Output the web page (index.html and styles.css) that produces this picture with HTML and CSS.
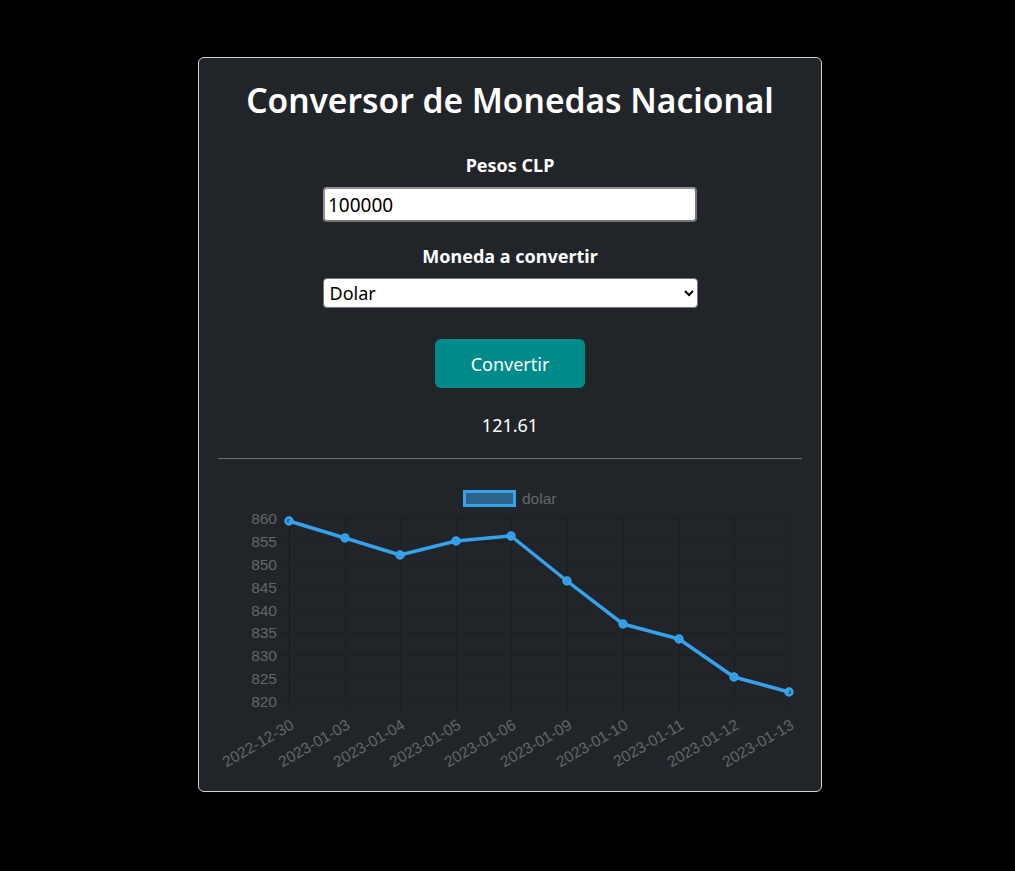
FILE: index.html
```html
<!DOCTYPE html>
<html lang="es">
<head>
<meta charset="utf-8">
<title>Conversor de Monedas Nacional</title>
<link rel="stylesheet" href="styles.css">
</head>
<body>
<main class="card">
  <h1 class="title">Conversor de Monedas Nacional</h1>
  <label class="label label-first" for="pesos">Pesos CLP</label>
  <input class="field input" id="pesos" type="text" value="100000">
  <label class="label label-second" for="moneda">Moneda a convertir</label>
  <select class="field select" id="moneda">
    <option>Dolar</option>
    <option>Euro</option>
  </select>
  <button class="btn" type="button">Convertir</button>
  <p class="result">121.61</p>
  <hr class="divider">
  <svg class="chart" width="583" height="322" viewBox="0 0 583 322">
    <!-- legend -->
    <rect x="246.5" y="32.5" width="50" height="14" fill="rgba(54,162,235,0.5)" stroke="#36a2eb" stroke-width="3"/>
    <text class="tick" x="304" y="44.5">dolar</text>

    <!-- grid -->
    <g stroke="#1c1f23" stroke-width="1">
      <line x1="61" y1="59.5" x2="571" y2="59.5"/>
      <line x1="61" y1="82.5" x2="571" y2="82.5"/>
      <line x1="61" y1="105.5" x2="571" y2="105.5"/>
      <line x1="61" y1="127.5" x2="571" y2="127.5"/>
      <line x1="61" y1="150.5" x2="571" y2="150.5"/>
      <line x1="61" y1="173.5" x2="571" y2="173.5"/>
      <line x1="61" y1="196.5" x2="571" y2="196.5"/>
      <line x1="61" y1="219.5" x2="571" y2="219.5"/>
      <line x1="61" y1="242.5" x2="571" y2="242.5"/>
      <line x1="71.5" y1="59" x2="71.5" y2="252"/>
      <line x1="127.5" y1="59" x2="127.5" y2="252"/>
      <line x1="182.5" y1="59" x2="182.5" y2="252"/>
      <line x1="238.5" y1="59" x2="238.5" y2="252"/>
      <line x1="293.5" y1="59" x2="293.5" y2="252"/>
      <line x1="349.5" y1="59" x2="349.5" y2="252"/>
      <line x1="405.5" y1="59" x2="405.5" y2="252"/>
      <line x1="461.5" y1="59" x2="461.5" y2="252"/>
      <line x1="516.5" y1="59" x2="516.5" y2="252"/>
      <line x1="571.5" y1="59" x2="571.5" y2="252"/>
    </g>
    <line x1="71.5" y1="59" x2="71.5" y2="243" stroke="#15171a" stroke-width="1"/>

    <!-- y ticks -->
    <g class="tick" text-anchor="end">
      <text x="59" y="65">860</text>
      <text x="59" y="88">855</text>
      <text x="59" y="111">850</text>
      <text x="59" y="133.5">845</text>
      <text x="59" y="156.5">840</text>
      <text x="59" y="179">835</text>
      <text x="59" y="202">830</text>
      <text x="59" y="225">825</text>
      <text x="59" y="248">820</text>
    </g>

    <!-- x ticks -->
    <g class="tick" text-anchor="end">
      <text transform="translate(77 269) rotate(-30)">2022-12-30</text>
      <text transform="translate(133 269) rotate(-30)">2023-01-03</text>
      <text transform="translate(188 269) rotate(-30)">2023-01-04</text>
      <text transform="translate(244 269) rotate(-30)">2023-01-05</text>
      <text transform="translate(299 269) rotate(-30)">2023-01-06</text>
      <text transform="translate(355 269) rotate(-30)">2023-01-09</text>
      <text transform="translate(411 269) rotate(-30)">2023-01-10</text>
      <text transform="translate(467 269) rotate(-30)">2023-01-11</text>
      <text transform="translate(522 269) rotate(-30)">2023-01-12</text>
      <text transform="translate(577 269) rotate(-30)">2023-01-13</text>
    </g>

    <!-- line -->
    <polyline fill="none" stroke="#36a2eb" stroke-width="3.5" stroke-linejoin="round"
      points="71,62 127,79 182,96 238,82 293,77 349,122 405,165 461,180 516,218 571,233"/>
    <g fill="rgba(54,162,235,0.5)" stroke="#36a2eb" stroke-width="2.5">
      <circle cx="71" cy="62" r="3.5"/>
      <circle cx="127" cy="79" r="3.5"/>
      <circle cx="182" cy="96" r="3.5"/>
      <circle cx="238" cy="82" r="3.5"/>
      <circle cx="293" cy="77" r="3.5"/>
      <circle cx="349" cy="122" r="3.5"/>
      <circle cx="405" cy="165" r="3.5"/>
      <circle cx="461" cy="180" r="3.5"/>
      <circle cx="516" cy="218" r="3.5"/>
      <circle cx="571" cy="233" r="3.5"/>
    </g>
  </svg>
</main>
</body>
</html>
```
FILE: styles.css
```css
html, body {
  margin: 0;
  padding: 0;
  background: #000;
}

body {
  display: flex;
  justify-content: center;
  padding-top: 57px;
  padding-left: 5px;
  font-family: "Noto Sans", "Open Sans", sans-serif;
  color: #fff;
}

.card {
  box-sizing: border-box;
  width: 624px;
  background: #212529;
  border: 1px solid #d0d2d4;
  border-radius: 6px;
  padding: 20px 19px 10px 19px;
  display: flex;
  flex-direction: column;
  align-items: center;
}

.title {
  margin: 0;
  font-size: 33.5px;
  line-height: 44px;
  font-weight: 600;
  letter-spacing: 0;
}

.label {
  display: block;
  font-size: 18px;
  line-height: 24px;
  font-weight: 700;
}

.label-first {
  margin-top: 31px;
}

.label-second {
  margin-top: 22px;
}

.field {
  box-sizing: border-box;
  width: 374px;
  font-family: "Noto Sans", "Open Sans", sans-serif;
  color: #000;
  background: #fff;
}

.input {
  margin-top: 10px;
  height: 35px;
  padding: 0 3px;
  font-size: 19px;
  border: 2px inset #767676;
  border-top-color: #e6e6e6;
  border-left-color: #e6e6e6;
  border-radius: 4px;
  outline: none;
}

.select {
  margin-top: 10px;
  width: 375px;
  height: 30px;
  padding: 0 2px;
  font-size: 18px;
  border: 1px solid #767676;
  border-radius: 4px;
}

.btn {
  margin-top: 31px;
  width: 150px;
  height: 49px;
  background: #008b8b;
  color: #fff;
  border: none;
  border-radius: 6px;
  font-family: "Noto Sans", "Open Sans", sans-serif;
  font-size: 18px;
  cursor: pointer;
}

.result {
  margin: 25px 0 0 0;
  font-size: 18px;
  line-height: 24px;
}

.divider {
  align-self: stretch;
  margin: 21px 0 0 0;
  border: none;
  border-top: 1px solid #6c6f73;
  height: 0;
}

.chart {
  display: block;
  align-self: flex-start;
}

.tick {
  font-family: "Liberation Sans", Arial, sans-serif;
  font-size: 15.5px;
  fill: #666;
}
```
